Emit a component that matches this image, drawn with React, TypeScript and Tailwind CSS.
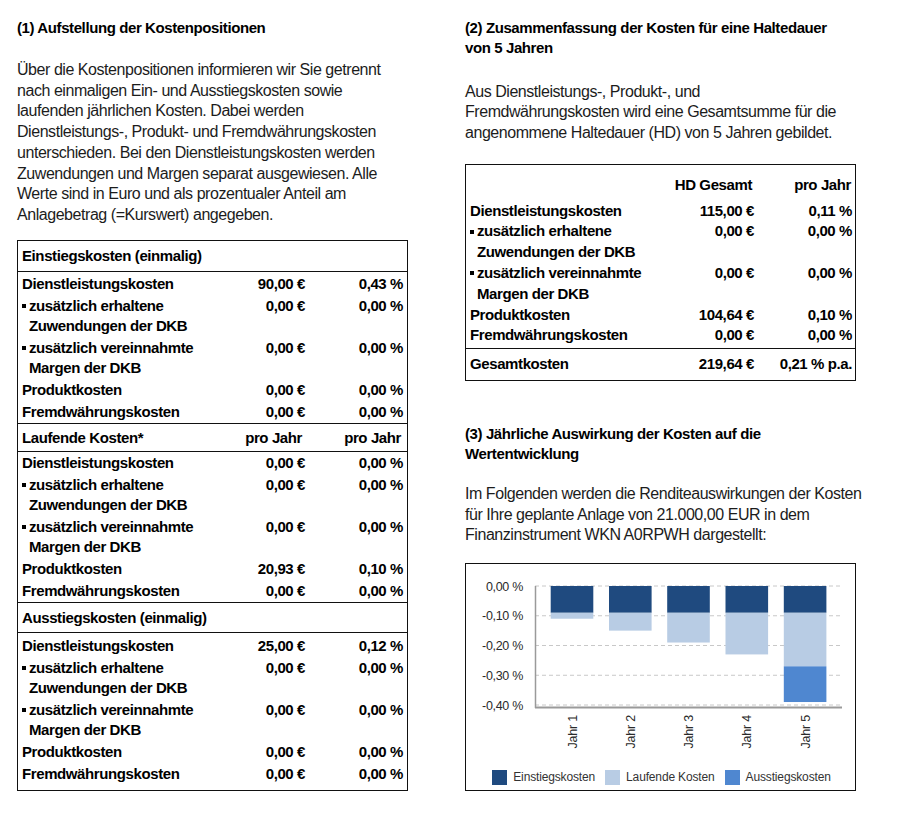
import React from "react";

type RowData = { label: string[]; sub?: boolean; v1: string; v2: string };

const rows1: RowData[] = [
  { label: ["Dienstleistungskosten"], v1: "90,00 €", v2: "0,43 %" },
  { label: ["zusätzlich erhaltene", "Zuwendungen der DKB"], sub: true, v1: "0,00 €", v2: "0,00 %" },
  { label: ["zusätzlich vereinnahmte", "Margen der DKB"], sub: true, v1: "0,00 €", v2: "0,00 %" },
  { label: ["Produktkosten"], v1: "0,00 €", v2: "0,00 %" },
  { label: ["Fremdwährungskosten"], v1: "0,00 €", v2: "0,00 %" },
];
const rows2: RowData[] = [
  { label: ["Dienstleistungskosten"], v1: "0,00 €", v2: "0,00 %" },
  { label: ["zusätzlich erhaltene", "Zuwendungen der DKB"], sub: true, v1: "0,00 €", v2: "0,00 %" },
  { label: ["zusätzlich vereinnahmte", "Margen der DKB"], sub: true, v1: "0,00 €", v2: "0,00 %" },
  { label: ["Produktkosten"], v1: "20,93 €", v2: "0,10 %" },
  { label: ["Fremdwährungskosten"], v1: "0,00 €", v2: "0,00 %" },
];
const rows3: RowData[] = [
  { label: ["Dienstleistungskosten"], v1: "25,00 €", v2: "0,12 %" },
  { label: ["zusätzlich erhaltene", "Zuwendungen der DKB"], sub: true, v1: "0,00 €", v2: "0,00 %" },
  { label: ["zusätzlich vereinnahmte", "Margen der DKB"], sub: true, v1: "0,00 €", v2: "0,00 %" },
  { label: ["Produktkosten"], v1: "0,00 €", v2: "0,00 %" },
  { label: ["Fremdwährungskosten"], v1: "0,00 €", v2: "0,00 %" },
];
const rowsR: RowData[] = [
  { label: ["Dienstleistungskosten"], v1: "115,00 €", v2: "0,11 %" },
  { label: ["zusätzlich erhaltene", "Zuwendungen der DKB"], sub: true, v1: "0,00 €", v2: "0,00 %" },
  { label: ["zusätzlich vereinnahmte", "Margen der DKB"], sub: true, v1: "0,00 €", v2: "0,00 %" },
  { label: ["Produktkosten"], v1: "104,64 €", v2: "0,10 %" },
  { label: ["Fremdwährungskosten"], v1: "0,00 €", v2: "0,00 %" },
];

/* Left-table row: single rows 22px tall, sub rows 2×20px lines plus 1px above/below */
function Row({ r }: { r: RowData }) {
  if (r.sub) {
    return (
      <div className="flex whitespace-nowrap leading-[20px] py-[1px]">
        <div className="flex-1 flex">
          <div className="w-[7px] shrink-0 h-[20px] flex items-center">
            <span className="block w-[4px] h-[4px] bg-black" />
          </div>
          <div>
            {r.label.map((l) => (
              <div key={l}>{l}</div>
            ))}
          </div>
        </div>
        <div className="w-[90px] text-right">{r.v1}</div>
        <div className="w-[98px] text-right">{r.v2}</div>
      </div>
    );
  }
  return (
    <div className="flex whitespace-nowrap leading-[22px]">
      <div className="flex-1">{r.label[0]}</div>
      <div className="w-[90px] text-right">{r.v1}</div>
      <div className="w-[98px] text-right">{r.v2}</div>
    </div>
  );
}

/* Right-table row: uniform 20.8px lines */
function TightRow({ r }: { r: RowData }) {
  return (
    <div className="flex whitespace-nowrap">
      <div className="flex-1">
        {r.sub ? (
          <div className="flex">
            <div className="w-[7px] shrink-0 h-[20.8px] flex items-center">
              <span className="block w-[4px] h-[4px] bg-black" />
            </div>
            <div>
              {r.label.map((l) => (
                <div key={l}>{l}</div>
              ))}
            </div>
          </div>
        ) : (
          <div>{r.label[0]}</div>
        )}
      </div>
      <div className="w-[90px] text-right">{r.v1}</div>
      <div className="w-[98px] text-right">{r.v2}</div>
    </div>
  );
}

const bold = "font-bold text-[15px] tracking-[-0.4px] text-black";
const reg = "text-[16px] tracking-[-0.45px] text-[#1c1c1c] whitespace-nowrap";

const Y0 = 22;
const S = 297.5;
const bars = [
  { x: 84.7, light: 0.11 },
  { x: 143, light: 0.15 },
  { x: 201.2, light: 0.19 },
  { x: 259.5, light: 0.23 },
  { x: 317.8, light: 0.27, exit: 0.39 },
];
const BW = 42.6;

function Chart() {
  const grid = [0, 0.1, 0.2, 0.3, 0.4];
  const labels = ["0,00 %", "-0,10 %", "-0,20 %", "-0,30 %", "-0,40 %"];
  return (
    <svg width="389" height="203" className="block" style={{ fontFamily: "'Liberation Sans', Arial, sans-serif" }}>
      {grid.map((g, i) => (
        <g key={g}>
          <line x1={69} x2={376} y1={Y0 + g * S} y2={Y0 + g * S} stroke="#c8c8c8" strokeWidth={1} strokeDasharray="4 3" />
          <text x={57} y={Y0 + g * S + 4.5} textAnchor="end" fontSize={12.5} fill="#2a2a2a" letterSpacing={-0.3}>
            {labels[i]}
          </text>
        </g>
      ))}
      {bars.map((b, i) => (
        <g key={i}>
          <rect x={b.x} y={Y0} width={BW} height={0.09 * S} fill="#1f4a7f" />
          <rect x={b.x} y={Y0 + 0.09 * S} width={BW} height={(b.light - 0.09) * S} fill="#b8cce4" />
          {b.exit ? (
            <rect x={b.x} y={Y0 + b.light * S} width={BW} height={(b.exit - b.light) * S} fill="#4f87d0" />
          ) : null}
          <text
            transform={`translate(${b.x + BW / 2 + 4.5},151) rotate(-90)`}
            textAnchor="end"
            fontSize={12.5}
            fill="#2a2a2a"
            letterSpacing={-0.2}
          >
            {`Jahr ${i + 1}`}
          </text>
        </g>
      ))}
      <line x1={69.5} x2={69.5} y1={22} y2={144} stroke="#9a9a9a" strokeWidth={1.5} />
      <line x1={69} x2={376} y1={143.5} y2={143.5} stroke="#9a9a9a" strokeWidth={2} />
    </svg>
  );
}

function Legend({ color, label }: { color: string; label: string }) {
  return (
    <div className="flex items-center gap-[6px]">
      <span className={`block w-[15px] h-[15px] ${color}`} />
      <span className="text-[12px] text-[#333] tracking-[-0.15px] leading-[15px]">{label}</span>
    </div>
  );
}

export default function App() {
  return (
    <div className="w-[897px] h-[834px] bg-white font-['Liberation_Sans',Arial,sans-serif] flex pt-[18px] pl-[17px]">
      {/* Left column */}
      <div className="w-[391px] shrink-0">
        <h2 className={`${bold} leading-[20px]`}>(1) Aufstellung der Kostenpositionen</h2>
        <p className={`${reg} mt-[22px] leading-[20.7px]`}>
          Über die Kostenpositionen informieren wir Sie getrennt
          <br />
          nach einmaligen Ein- und Ausstiegskosten sowie
          <br />
          laufenden jährlichen Kosten. Dabei werden
          <br />
          Dienstleistungs-, Produkt- und Fremdwährungskosten
          <br />
          unterschieden. Bei den Dienstleistungskosten werden
          <br />
          Zuwendungen und Margen separat ausgewiesen. Alle
          <br />
          Werte sind in Euro und als prozentualer Anteil am
          <br />
          Anlagebetrag (=Kurswert) angegeben.
        </p>

        <div className={`mt-[14px] border border-[#111] ${bold}`}>
          <div className="h-[31px] flex items-center px-[4px] border-b border-[#111] leading-[21px]">
            Einstiegskosten (einmalig)
          </div>
          <div className="px-[4px] pt-[1px]">
            {rows1.map((r, i) => (
              <Row key={i} r={r} />
            ))}
          </div>
          <div className="h-[29px] flex items-center px-[4px] border-y border-[#111] leading-[21px]">
            <div className="flex-1">Laufende Kosten*</div>
            <div className="w-[90px] text-right pr-[3px]">pro Jahr</div>
            <div className="w-[98px] text-right pr-[2px]">pro Jahr</div>
          </div>
          <div className="px-[4px] pt-[0.5px]">
            {rows2.map((r, i) => (
              <Row key={i} r={r} />
            ))}
          </div>
          <div className="h-[31px] flex items-center px-[4px] border-y border-[#111] leading-[21px]">
            Ausstiegskosten (einmalig)
          </div>
          <div className="px-[4px] pt-[2px] pb-[5px]">
            {rows3.map((r, i) => (
              <Row key={i} r={r} />
            ))}
          </div>
        </div>
      </div>

      {/* Right column */}
      <div className="w-[391px] shrink-0 ml-[57px]">
        <h2 className={`${bold} leading-[20px]`}>
          (2) Zusammenfassung der Kosten für eine Haltedauer
          <br />
          von 5 Jahren
        </h2>
        <p className={`${reg} mt-[24px] leading-[20.3px]`}>
          Aus Dienstleistungs-, Produkt-, und
          <br />
          Fremdwährungskosten wird eine Gesamtsumme für die
          <br />
          angenommene Haltedauer (HD) von 5 Jahren gebildet.
        </p>

        <div className={`mt-[21px] border border-[#111] ${bold} leading-[20.8px]`}>
          <div className="pl-[4px] pr-[3px] pt-[10px] pb-[2px]">
            <div className="flex mb-[5px]">
              <div className="flex-1" />
              <div className="w-[90px] text-right pr-[2px]">HD Gesamt</div>
              <div className="w-[98px] text-right pr-[1px]">pro Jahr</div>
            </div>
            {rowsR.map((r, i) => (
              <TightRow key={i} r={r} />
            ))}
          </div>
          <div className="h-[32px] flex items-center pl-[4px] pr-[3px] border-t border-[#111]">
            <div className="flex-1">Gesamtkosten</div>
            <div className="w-[90px] text-right">219,64 €</div>
            <div className="w-[98px] text-right">0,21 % p.a.</div>
          </div>
        </div>

        <h2 className={`${bold} leading-[20px] mt-[43px]`}>
          (3) Jährliche Auswirkung der Kosten auf die
          <br />
          Wertentwicklung
        </h2>
        <p className={`${reg} mt-[20px] leading-[20.5px]`}>
          Im Folgenden werden die Renditeauswirkungen der Kosten
          <br />
          für Ihre geplante Anlage von 21.000,00 EUR in dem
          <br />
          Finanzinstrument WKN A0RPWH dargestellt:
        </p>

        <div className="mt-[17px] border border-[#111] pb-[5px]">
          <Chart />
          <div className="mt-[3px] flex justify-center items-center gap-[10px] pl-[2px]">
            <Legend color="bg-[#1f4a7f]" label="Einstiegskosten" />
            <Legend color="bg-[#b8cce4]" label="Laufende Kosten" />
            <Legend color="bg-[#4f87d0]" label="Ausstiegskosten" />
          </div>
        </div>
      </div>
    </div>
  );
}
